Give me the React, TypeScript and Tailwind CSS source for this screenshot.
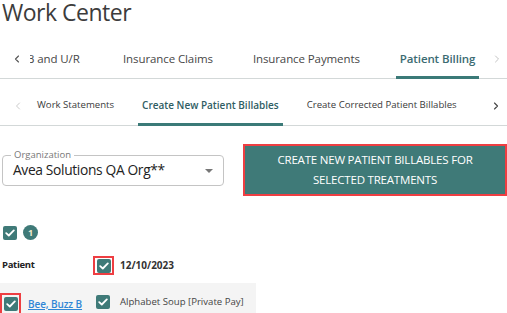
import { ChevronLeft, ChevronRight } from "lucide-react";

function Check({ extra }: { extra?: string }) {
  return (
    <span
      className={
        "flex h-[14px] w-[14px] shrink-0 items-center justify-center rounded-[2px] bg-[#3f7a78] " +
        (extra ?? "")
      }
    >
      <svg width="10" height="8" viewBox="0 0 10 8">
        <path
          d="M1.2 4.1 L3.8 6.5 L8.8 1.4"
          stroke="white"
          strokeWidth="1.8"
          fill="none"
          strokeLinecap="round"
          strokeLinejoin="round"
        />
      </svg>
    </span>
  );
}

export default function App() {
  return (
    <div className="relative h-[313px] w-[507px] overflow-hidden bg-white font-['Open_Sans',sans-serif] text-[#3a3a3a]">
      {/* Title */}
      <div className="h-[30px] pl-[2px] text-[23px] leading-[25px] tracking-[-0.5px] text-[#3c3c3c]">
        Work Center
      </div>

      {/* Tabs row 1 */}
      <div className="mt-[12px] flex h-[37px] items-start border-b border-[#d3d8d8]">
        <div className="flex h-[34px] w-[30px] shrink-0 items-center justify-center pl-[3px]">
          <ChevronLeft size={12} strokeWidth={2.2} color="#555" />
        </div>
        <div className="flex h-[37px] flex-1 gap-[32px] overflow-hidden text-[11.5px] tracking-[-0.1px] text-[#474747]">
          <div className="-ml-[7px] flex h-[37px] w-[64px] shrink-0 items-center border-b-[3px] border-transparent px-[4px] whitespace-nowrap">
            B and U/R
          </div>
          <div className="flex h-[37px] shrink-0 items-center border-b-[3px] border-transparent px-[4px] whitespace-nowrap">
            Insurance Claims
          </div>
          <div className="flex h-[37px] shrink-0 items-center border-b-[3px] border-transparent px-[4px] whitespace-nowrap">
            Insurance Payments
          </div>
          <div className="flex h-[37px] shrink-0 items-center border-b-[3px] border-[#3b7a78] px-[4px] font-semibold whitespace-nowrap text-[#3b6b72]">
            Patient Billing
          </div>
        </div>
        <div className="flex h-[34px] w-[22px] shrink-0 items-center justify-start pl-[6px]">
          <ChevronRight size={12} strokeWidth={2} color="#c4c4c4" />
        </div>
      </div>

      {/* Tabs row 2 */}
      <div className="mt-[9px] flex h-[38px] items-start border-b border-[#d3d8d8]">
        <div className="flex h-[35px] w-[33px] shrink-0 items-center justify-center pl-[3px]">
          <ChevronLeft size={12} strokeWidth={1.8} color="#c4c4c4" />
        </div>
        <div className="flex h-[38px] flex-1 gap-[20px] overflow-hidden text-[9.6px] text-[#3a3a3a]">
          <div className="flex h-[38px] shrink-0 items-center border-b-[3px] border-transparent px-[4px] whitespace-nowrap">
            Work Statements
          </div>
          <div className="flex h-[38px] shrink-0 items-center border-b-[3px] border-[#3b7a78] px-[4px] text-[10px] font-semibold whitespace-nowrap text-[#2f5d63]">
            Create New Patient Billables
          </div>
          <div className="flex h-[38px] shrink-0 items-center border-b-[3px] border-transparent px-[4px] whitespace-nowrap">
            Create Corrected Patient Billables
          </div>
        </div>
        <div className="flex h-[35px] w-[22px] shrink-0 items-center justify-start pl-[5px]">
          <ChevronRight size={12} strokeWidth={2.2} color="#444" />
        </div>
      </div>

      {/* Org + button */}
      <div className="mt-[18px] flex items-center">
        <div className="relative ml-[2px] flex h-[31px] w-[222px] shrink-0 items-center rounded-[4px] border border-[#c4c4c4] pl-[10px]">
          <span className="absolute -top-[8px] left-[8px] bg-white px-[3px] text-[9.5px] leading-[14px] text-[#777]">
            Organization
          </span>
          <span className="text-[13.8px] leading-[20px] tracking-[-0.35px] text-[#222]">
            Avea Solutions QA Org**
          </span>
          <span className="absolute right-[10px] top-[13px] h-0 w-0 border-x-[4px] border-t-[4px] border-x-transparent border-t-[#777]" />
        </div>
        <div className="ml-[19px] flex h-[52px] flex-1 items-center justify-center border-2 border-[#ee3e42] bg-[#3f7a78] text-center text-[11.5px] leading-[20px] tracking-[-0.2px] text-white">
          CREATE NEW PATIENT BILLABLES FOR
          <br />
          SELECTED TREATMENTS
        </div>
      </div>

      {/* Select all */}
      <div className="mt-[29px] flex items-center pl-[3px]">
        <Check />
        <span className="ml-[6px] flex h-[15px] w-[15px] items-center justify-center rounded-full bg-[#3f7a78] text-[9px] font-bold leading-none text-[#f3eccf]">
          1
        </span>
      </div>

      {/* Patient header */}
      <div className="mt-[16px] flex items-center">
        <div className="w-[93px] pl-[2px] text-[9.5px] font-bold tracking-[-0.3px] text-[#222]">
          Patient
        </div>
        <div className="flex h-[19px] w-[21px] items-center justify-center border-2 border-[#ee3e42]">
          <Check />
        </div>
        <div className="ml-[6px] text-[10px] font-bold text-[#333]">12/10/2023</div>
      </div>

      {/* Data row */}
      <div className="mt-[8px] flex h-[31px] w-[256px] items-start bg-[#f4f4f4] pt-[10px]">
        <div className="flex h-[22px] w-[21px] shrink-0 items-center justify-center border-2 border-[#ee3e42]">
          <Check />
        </div>
        <div className="flex h-[22px] w-[75px] shrink-0 items-center pl-[7px]">
          <span className="text-[10px] font-semibold tracking-[-0.1px] text-[#2f86d6] underline">
            Bee, Buzz B
          </span>
        </div>
        <div className="flex h-[22px] items-center">
          <Check extra="-mt-[4px]" />
          <span className="-mt-[4px] ml-[10px] whitespace-nowrap text-[9.6px] text-[#444]">
            Alphabet Soup [Private Pay]
          </span>
        </div>
      </div>
    </div>
  );
}
